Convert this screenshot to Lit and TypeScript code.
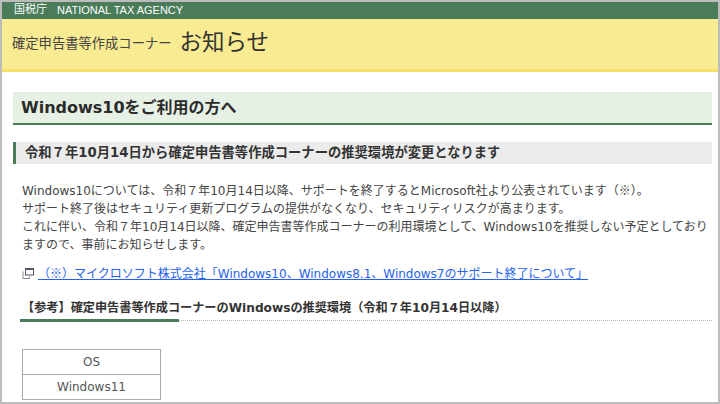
import { LitElement, html, css } from "lit";
import { customElement } from "lit/decorators.js";

@customElement("app-root")
export class AppRoot extends LitElement {
  static styles = css`
    :host {
      display: block;
      width: 720px;
      height: 404px;
      box-sizing: border-box;
      overflow: hidden;
      background: #fff;
      border: solid #bdbdbd;
      border-width: 2px;
      font-family: "DejaVu Sans", "Noto Sans CJK JP", sans-serif;
      color: #444;
    }
    .cjk { font-family: "Noto Sans CJK JP", sans-serif; line-height: 0; }
    .top {
      height: 17px;
      background: #4a7c59;
      color: #fff;
      font-size: 11px;
      line-height: 16px;
      padding-left: 12px;
      display: flex;
      gap: 10px;
    }
    .top .en { font-family: "Liberation Sans", sans-serif; font-size: 11px; }
    .band {
      height: 50px;
      background: #f9eb92;
      border-bottom: 3px solid #f5e16a;
      display: flex;
      align-items: center;
      padding-left: 10px;
      gap: 8px;
    }
    .band .sub { font-size: 13.3px; color: #444; margin-top: -3px; }
    .band .main { font-size: 22.5px; color: #333; margin-top: -8px; }
    .content {
      padding: 20px 6px 0 11px;
    }
    h1 {
      margin: 0;
      height: 31px;
      line-height: 32px;
      background: #e6f0e5;
      border-bottom: 2px solid #4a7c59;
      padding-left: 8px;
      font-size: 16px;
      font-weight: 700;
      color: #2b2b2b;
    }
    h2 {
      margin: 17px 0 0;
      height: 22px;
      line-height: 22px;
      background: #ebebeb;
      border-left: 3px solid #4a7c59;
      padding-left: 9px;
      font-size: 13.3px;
      font-weight: 700;
      color: #333;
    }
    .body { padding-left: 9px; }
    p {
      margin: 18px 0 0;
      font-size: 12px;
      line-height: 18px;
      color: #444;
    }
    .link {
      margin-top: 8px;
      height: 20px;
      display: flex;
      align-items: center;
      gap: 4px;
      font-size: 12px;
    }
    .link svg { flex: none; margin-top: 3px; }
    .link a { color: #2563eb; text-decoration: underline; }
    h3 {
      margin: 16px 0 0 -2px;
      font-size: 12.17px;
      font-weight: 700;
      line-height: 20px;
      padding: 0 0 2px 2px;
      color: #333;
      border-bottom: 1px dotted #a3c2ac;
      position: relative;
    }
    h3::after {
      content: "";
      position: absolute;
      left: 0;
      bottom: -2px;
      width: 159px;
      height: 3px;
      background: #4a7c59;
    }
    table {
      margin-top: 28px;
      width: 139px;
      border-collapse: collapse;
      font-size: 12px;
      color: #555;
    }
    td {
      border: 1px solid #aaa;
      height: 24px;
      padding: 0;
      text-align: center;
    }
  `;

  render() {
    return html`
      <div class="top"><span>国税庁</span><span class="en">NATIONAL TAX AGENCY</span></div>
      <div class="band">
        <span class="sub">確定申告書等作成コーナー</span>
        <span class="main">お知らせ</span>
      </div>
      <div class="content">
        <h1>Windows10をご利用の方へ</h1>
        <h2>令和７年10月14日から確定申告書等作成コーナーの推奨環境が変更となります</h2>
        <div class="body">
          <p>
            Windows10については、令和７年10月14日以降、サポートを終了するとMicrosoft社より公表されています（<span class="cjk">※</span>）。<br />
            サポート終了後はセキュリティ更新プログラムの提供がなくなり、セキュリティリスクが高まります。<br />
            これに伴い、令和７年10月14日以降、確定申告書等作成コーナーの利用環境として、Windows10を推奨しない予定としておりますので、事前にお知らせします。
          </p>
          <div class="link">
            <svg width="12" height="11" viewBox="0 0 12 11" fill="none" stroke-width="1">
              <path d="M1 3.5v7h6.5v-2" stroke="#888" />
              <rect x="3.5" y="0.5" width="8" height="6.5" stroke="#556" />
              <path d="M3.5 1.5h8" stroke="#556" />
            </svg>
            <a href="#">（<span class="cjk">※</span>）マイクロソフト株式会社「Windows10、Windows8.1、Windows7のサポート終了について」</a>
          </div>
          <h3>【参考】確定申告書等作成コーナーのWindowsの推奨環境（令和７年10月14日以降）</h3>
          <table>
            <tr><td>OS</td></tr>
            <tr><td>Windows11</td></tr>
          </table>
        </div>
      </div>
    `;
  }
}
